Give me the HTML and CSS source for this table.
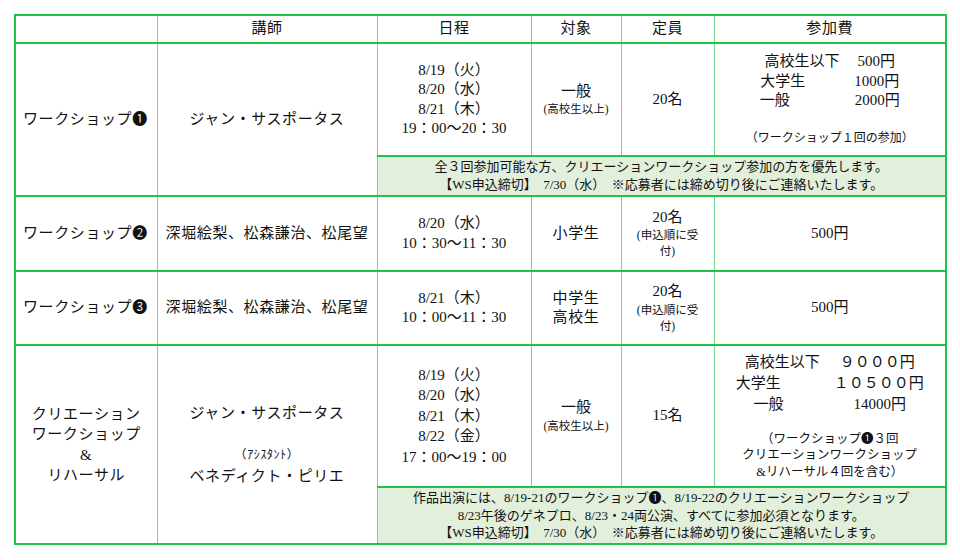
FILE: index.html
```html
<!DOCTYPE html>
<html lang="ja">
<head>
<meta charset="utf-8">
<title>ワークショップ</title>
<link rel="stylesheet" href="styles.css">
</head>
<body>
<table class="ws">
  <colgroup>
    <col class="c1"><col class="c2"><col class="c3"><col class="c4"><col class="c5"><col class="c6">
  </colgroup>
  <tr class="head">
    <td></td>
    <td class="sp">講師</td>
    <td class="sp">日程</td>
    <td class="sp">対象</td>
    <td class="sp">定員</td>
    <td class="sp">参加費</td>
  </tr>
  <tr class="main r1">
    <td rowspan="2" class="title sp">ワークショップ❶</td>
    <td rowspan="2" class="sp">ジャン・サスポータス</td>
    <td>8/19（火）<br>8/20（水）<br>8/21（木）<br>19：00～20：30</td>
    <td>一般<div class="tiny">(高校生以上)</div></td>
    <td>20名</td>
    <td>
      <div class="fee f1a"><span>高校生以下</span><span>500円</span></div>
      <div class="fee f1b"><span>大学生</span><span>1000円</span></div>
      <div class="fee f1c"><span>一般</span><span>2000円</span></div>
      <div class="small s1">（ワークショップ１回の参加）</div>
    </td>
  </tr>
  <tr class="noterow n1">
    <td colspan="4" class="note">全３回参加可能な方、クリエーションワークショップ参加の方を優先します。<br>【WS申込締切】　7/30（水）　※応募者には締め切り後にご連絡いたします。</td>
  </tr>
  <tr class="main r2">
    <td class="title sp">ワークショップ❷</td>
    <td class="sp">深堀絵梨、松森謙治、松尾望</td>
    <td>8/20（水）<br>10：30～11：30</td>
    <td class="sp">小学生</td>
    <td>20名<div class="tiny">(申込順に受<br>付)</div></td>
    <td>500円</td>
  </tr>
  <tr class="main r3">
    <td class="title sp">ワークショップ❸</td>
    <td class="sp">深堀絵梨、松森謙治、松尾望</td>
    <td>8/21（木）<br>10：00～11：30</td>
    <td class="sp">中学生<br>高校生</td>
    <td>20名<div class="tiny">(申込順に受<br>付)</div></td>
    <td>500円</td>
  </tr>
  <tr class="main r4">
    <td rowspan="2" class="sp tall">クリエーション<br>ワークショップ<br>&amp;<br>リハーサル</td>
    <td rowspan="2" class="sp tall">ジャン・サスポータス<br><br><span class="asst">（ｱｼｽﾀﾝﾄ）</span><br>ベネディクト・ピリエ</td>
    <td class="tall">8/19（火）<br>8/20（水）<br>8/21（木）<br>8/22（金）<br>17：00～19：00</td>
    <td>一般<div class="tiny">(高校生以上)</div></td>
    <td>15名</td>
    <td>
      <div class="fee big f4a"><span>高校生以下</span><span>９０００円</span></div>
      <div class="fee big f4b"><span>大学生</span><span>１０５００円</span></div>
      <div class="fee big f4c"><span>一般</span><span>14000円</span></div>
      <div class="small s4">（ワークショップ❶３回<br>クリエーションワークショップ<br>&amp;リハーサル４回を含む）</div>
    </td>
  </tr>
  <tr class="noterow n4">
    <td colspan="4" class="note">作品出演には、8/19-21のワークショップ❶、8/19-22のクリエーションワークショップ<br>8/23午後のゲネプロ、8/23・24両公演、すべてに参加必須となります。<br>【WS申込締切】　7/30（水）　※応募者には締め切り後にご連絡いたします。</td>
  </tr>
</table>
</body>
</html>
```

FILE: styles.css
```css
html, body {
  background: #ffffff;
}
body {
  margin: 0;
  padding: 14px;
  font-family: "Liberation Serif", "Noto Sans CJK JP", serif;
  font-size: 15px;
  color: #111111;
}
.ws {
  border-collapse: collapse;
  table-layout: fixed;
  width: 931px;
  border: 2px solid #23c04c;
}
.c1 { width: 142px; }
.c2 { width: 220px; }
.c3 { width: 154px; }
.c4 { width: 90px; }
.c5 { width: 93px; }
.c6 { width: 232px; }

.ws td {
  border: 1px solid #74d38c;
  padding: 0;
  text-align: center;
  vertical-align: middle;
  line-height: 19.5px;
}
.ws tr.main > td,
.ws tr.head > td {
  border-bottom: 2px solid #23c04c;
}
.ws tr.main > td {
  border-top: 2px solid #23c04c;
}
.ws tr.noterow > td {
  border-bottom: 2px solid #23c04c;
}
.head { height: 28px; }
.r1 { height: 113px; }
.n1 { height: 40px; }
.r2 { height: 75px; }
.r3 { height: 74px; }
.r4 { height: 142px; }
.n4 { height: 57px; }

.sp { letter-spacing: 0.6px; }
.ws td.title {
  text-align: left;
  padding-left: 7px;
}
.ws td.tall { line-height: 20.5px; }

.tiny {
  font-size: 11.5px;
  line-height: 16px;
}
.asst {
  font-size: 12px;
}
.fee {
  display: flex;
  justify-content: center;
}
.fee.big { line-height: 21px; }
.f1a span:last-child { margin-left: 18px; }
.f1b span:last-child { margin-left: 49px; }
.f1c span:last-child { margin-left: 65px; }
.f4a span:last-child { margin-left: 20px; }
.f4b span:last-child { margin-left: 53px; }
.f4c span:last-child { margin-left: 70px; }

.small {
  font-size: 12px;
  line-height: 17px;
}
.s1 { margin-top: 19px; }
.s4 { margin-top: 16px; font-size: 12.5px; line-height: 16.5px; }

.ws td.note {
  background: #e2efda;
  border-top: 1px solid #8fd9a0;
  font-size: 13px;
  line-height: 18px;
}
.n4 td.note { line-height: 17.5px; }
```
